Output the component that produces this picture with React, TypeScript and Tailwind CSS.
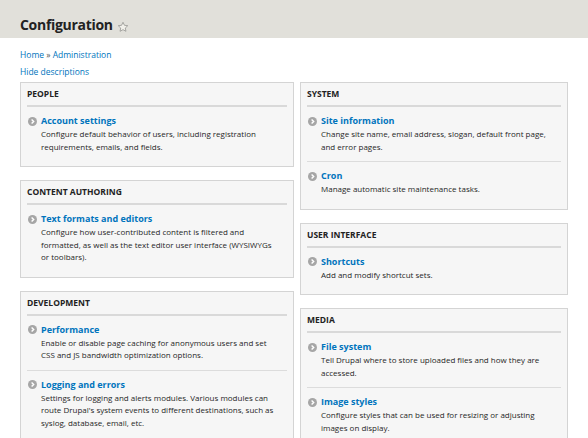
import React from "react";

type Item = { title: string; desc: string };
type Panel = { heading: string; items: Item[] };

const leftPanels: Panel[] = [
  {
    heading: "People",
    items: [
      {
        title: "Account settings",
        desc: "Configure default behavior of users, including registration requirements, emails, and fields.",
      },
    ],
  },
  {
    heading: "Content authoring",
    items: [
      {
        title: "Text formats and editors",
        desc: "Configure how user-contributed content is filtered and formatted, as well as the text editor user interface (WYSIWYGs or toolbars).",
      },
    ],
  },
  {
    heading: "Development",
    items: [
      {
        title: "Performance",
        desc: "Enable or disable page caching for anonymous users and set CSS and JS bandwidth optimization options.",
      },
      {
        title: "Logging and errors",
        desc: "Settings for logging and alerts modules. Various modules can route Drupal's system events to different destinations, such as syslog, database, email, etc.",
      },
    ],
  },
];

const rightPanels: Panel[] = [
  {
    heading: "System",
    items: [
      {
        title: "Site information",
        desc: "Change site name, email address, slogan, default front page, and error pages.",
      },
      { title: "Cron", desc: "Manage automatic site maintenance tasks." },
    ],
  },
  {
    heading: "User interface",
    items: [{ title: "Shortcuts", desc: "Add and modify shortcut sets." }],
  },
  {
    heading: "Media",
    items: [
      {
        title: "File system",
        desc: "Tell Drupal where to store uploaded files and how they are accessed.",
      },
      {
        title: "Image styles",
        desc: "Configure styles that can be used for resizing or adjusting images on display.",
      },
    ],
  },
];

/*~~~~~~~~~~ Icons ~~~~~~~~~~*/
const ArrowBullet = () => (
  <svg width="9" height="9" viewBox="0 0 9 9" className="block">
    <circle cx="4.5" cy="4.5" r="4.5" fill="#a6a6a6" />
    <path d="M3.6 2.4 L5.7 4.5 L3.6 6.6" fill="none" stroke="#fff" strokeWidth="1.4" />
  </svg>
);

const Star = () => (
  <svg width="12" height="12" viewBox="0 0 24 24" className="mt-[3px] block">
    <path
      d="M12 2.5l2.9 6.1 6.6.8-4.9 4.6 1.3 6.6L12 17.3l-5.9 3.3 1.3-6.6-4.9-4.6 6.6-.8z"
      fill="#f1f0ea"
      stroke="#9a9a96"
      strokeWidth="1.7"
      strokeLinejoin="round"
    />
  </svg>
);

const AdminPanel = ({ panel }: { panel: Panel }) => (
  <div className="border border-[#d4d4d4] bg-[#f6f6f6] px-[6px] pb-[5px]">
    <h3 className="pt-[5px] pb-[5px] text-[8.5px] leading-[12px] font-bold uppercase text-[#222]">
      {panel.heading}
    </h3>
    <div className="border-t-2 border-[#d9d9d9]">
      {panel.items.map((item, idx) => (
        <div
          key={item.title}
          className={`flex pt-[7px] pb-[8px] pr-[6px] ${idx > 0 ? "border-t border-[#dcdcdc]" : ""}`}
        >
          <div className="w-[14px] shrink-0 pl-[1px] pt-[2.5px]">
            <ArrowBullet />
          </div>
          <div>
            <a className="block text-[9px] leading-[14px] font-bold text-[#0074bd]">{item.title}</a>
            <p className="text-[8px] leading-[12.5px] text-[#262626]">{item.desc}</p>
          </div>
        </div>
      ))}
    </div>
  </div>
);

export default function App() {
  return (
    <div className="h-[438px] overflow-hidden bg-white font-['Open_Sans',sans-serif]">
      {/* Page header */}
      <div className="flex h-[38px] items-start gap-[4px] bg-[#e1e0da] px-[20px] pt-[18px]">
        <h1 className="text-[14px] leading-[14px] font-bold tracking-[-0.3px] text-[#222]">
          Configuration
        </h1>
        <Star />
      </div>

      {/* Breadcrumb + toggle */}
      <div className="px-[20px] pt-[8px] text-[8.5px] leading-[17px] text-[#0074bd]">
        <div>
          Home <span className="text-[#555]">»</span> Administration
        </div>
        <div>Hide descriptions</div>
      </div>

      {/* Admin panels */}
      <div className="flex gap-[6px] px-[20px] pt-[2px]">
        <div className="flex w-[274px] flex-col gap-[13px]">
          {leftPanels.map((p) => (
            <AdminPanel key={p.heading} panel={p} />
          ))}
        </div>
        <div className="flex w-[268px] flex-col gap-[13px]">
          {rightPanels.map((p) => (
            <AdminPanel key={p.heading} panel={p} />
          ))}
        </div>
      </div>
    </div>
  );
}
